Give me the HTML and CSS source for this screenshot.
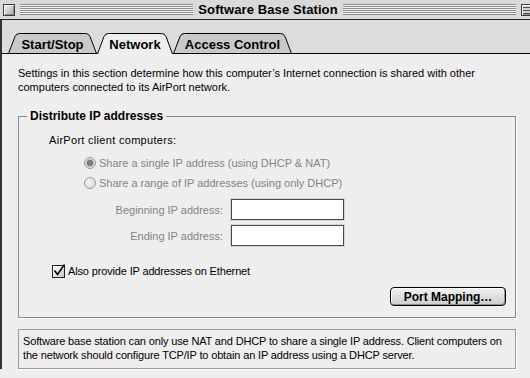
FILE: index.html
```html
<!DOCTYPE html>
<html lang="en">
<head>
  <meta charset="UTF-8" />
  <title>Software Base Station</title>
  <link rel="stylesheet" href="styles.css">
</head>
<body>
  <div class="window">
    <div class="titlebar">
      <span class="close-box"></span>
      <span class="stripes"></span>
      <span class="title">Software Base Station</span>
      <span class="stripes"></span>
      <span class="shade-box"></span>
    </div>

    <div class="frame">
      <div class="tabstrip">
        <div class="tab tab-start">
          <svg class="tab-shape" width="89" height="21" viewBox="0 0 89 21">
            <path d="M0.5 20.5 L7 3.5 Q8.2 0.5 11.5 0.5 H77.5 Q80.8 0.5 82 3.5 L88.5 20.5 Z" fill="#c9c9c9" stroke="#000"/>
          </svg>
          <span>Start/Stop</span>
        </div>
        <div class="tab tab-network selected">
          <svg class="tab-shape" width="76" height="21" viewBox="0 0 76 21">
            <path d="M0.5 21 L7 3.5 Q8.2 0.5 11.5 0.5 H64.5 Q67.8 0.5 69 3.5 L75.5 21 Z" fill="#eee"/>
            <path d="M0.5 21 L7 3.5 Q8.2 0.5 11.5 0.5 H64.5 Q67.8 0.5 69 3.5 L75.5 21" fill="none" stroke="#000"/>
          </svg>
          <span>Network</span>
        </div>
        <div class="tab tab-access">
          <svg class="tab-shape" width="119" height="21" viewBox="0 0 119 21">
            <path d="M0.5 20.5 L7 3.5 Q8.2 0.5 11.5 0.5 H107.5 Q110.8 0.5 112 3.5 L118.5 20.5 Z" fill="#c9c9c9" stroke="#000"/>
          </svg>
          <span>Access Control</span>
        </div>
      </div>

      <div class="pane">
        <p class="intro">Settings in this section determine how this computer’s Internet connection is shared with other<br>computers connected to its AirPort network.</p>

        <fieldset class="group">
          <legend>Distribute IP addresses</legend>
          <div class="group-body">
            <div class="client-label">AirPort client computers:</div>

            <div class="radios">
              <div class="radio-row"><span class="radio on"></span>Share a single IP address (using DHCP &amp; NAT)</div>
              <div class="radio-row"><span class="radio"></span>Share a range of IP addresses (using only DHCP)</div>
            </div>

            <div class="ip-grid">
              <label>Beginning IP address:</label><span class="field"></span>
              <label>Ending IP address:</label><span class="field"></span>
            </div>

            <div class="check-row">
              <span class="checkbox">
                <svg class="tick" width="14" height="14" viewBox="0 0 14 14">
                  <path d="M2.5 6.5 L5.5 10.5 L12.5 0.5" fill="none" stroke="#000" stroke-width="1.6"/>
                </svg>
              </span>
              Also provide IP addresses on Ethernet
            </div>

            <div class="actions">
              <button class="btn">Port Mapping…</button>
            </div>
          </div>
        </fieldset>

        <div class="info">Software base station can only use NAT and DHCP to share a single IP address. Client computers on<br>the network should configure TCP/IP to obtain an IP address using a DHCP server.</div>
      </div>
    </div>
  </div>
</body>
</html>
```

FILE: styles.css
```css
body {
  margin: 0;
  background: #eee;
  font-family: "Liberation Sans", Arial, sans-serif;
  font-size: 11px;
  color: #000;
}

.window {
  width: 530px;
  height: 378px;
  overflow: hidden;
  background: #eee;
}

/* title bar */
.titlebar {
  display: flex;
  align-items: center;
  height: 19px;
  padding-left: 3px;
  overflow: hidden;
  background: #d9d9d9;
  border-bottom: 1px solid #262626;
}

.close-box,
.shade-box {
  flex: none;
  box-sizing: border-box;
  width: 12px;
  height: 12px;
  border: 1px solid #3c3c3c;
  background: linear-gradient(135deg, #f4f4f4, #a8a8a8);
  box-shadow: inset 1px 1px 0 #fff, inset -1px -1px 0 #8a8a8a;
}

.shade-box {
  margin-right: -3px;
  background: repeating-linear-gradient(to bottom, #d0d0d0 0 2px, #555 2px 3px);
}

.stripes {
  flex: 1;
  height: 11px;
  margin: 0 5px;
  background: repeating-linear-gradient(to bottom, #8c8c8c 0 1px, #f5f5f5 1px 2px);
}

.title {
  font-size: 13px;
  font-weight: bold;
  line-height: 19px;
  letter-spacing: 0.1px;
}

/* window body */
.frame {
  border-left: 2px solid #333;
}

.tabstrip {
  display: flex;
  align-items: flex-end;
  box-sizing: border-box;
  height: 34px;
  padding-left: 6px;
  background: #dcdcdc;
  box-shadow: inset 0 -1px 0 #000;
}

.tab {
  position: relative;
  display: flex;
  align-items: center;
  justify-content: center;
  height: 21px;
  padding-top: 1px;
  box-sizing: border-box;
  font-size: 13px;
  font-weight: bold;
}

.tab span {
  position: relative;
}

.tab-shape {
  position: absolute;
  left: 0;
  top: 0;
}

.tab-start { width: 89px; }
.tab-network { width: 76px; }
.tab-access { width: 119px; }

.pane {
  padding: 12px 14px 0 16px;
  background: #eee;
}

.intro {
  margin: 0;
  line-height: 14px;
}

/* group box */
.group {
  margin: 15px 0 0;
  padding: 10px 9px 11px 8px;
  border: 1px solid #8c8c8c;
  box-shadow: 1px 1px 0 #fff;
  min-width: 0;
}

.group legend {
  padding: 0 3px;
  font-size: 12px;
  font-weight: bold;
  line-height: 14px;
}

.group-body {
  padding-left: 22px;
}

.client-label {
  line-height: 14px;
  letter-spacing: 0.3px;
}

.radios {
  margin-top: 6px;
}

.radio-row {
  display: flex;
  align-items: center;
  gap: 3px;
  height: 20px;
  padding-left: 35px;
  color: #838383;
}

.radio {
  box-sizing: border-box;
  width: 12px;
  height: 12px;
  border: 1px solid #9c9c9c;
  border-radius: 50%;
  background: radial-gradient(circle at 40% 40%, #f6f6f6, #d2d2d2);
}

.radio.on {
  background: radial-gradient(circle, #7c7c7c 0 3px, #c4c4c4 3.5px, #e4e4e4 5px);
}

.ip-grid {
  display: grid;
  grid-template-columns: 174px 113px;
  column-gap: 8px;
  row-gap: 5px;
  align-items: center;
  margin-top: 6px;
  color: #838383;
}

.ip-grid label {
  text-align: right;
}

.field {
  box-sizing: border-box;
  height: 21px;
  border: 1px solid #4a4a4a;
  background: #fff;
  box-shadow: 0 0 0 1px #d4d4d4;
}

.check-row {
  display: flex;
  align-items: center;
  gap: 3px;
  margin-top: 18px;
  padding-left: 3px;
  line-height: 14px;
  letter-spacing: -0.15px;
}

.checkbox {
  position: relative;
  box-sizing: border-box;
  width: 13px;
  height: 13px;
  border: 1px solid #222;
  background: linear-gradient(135deg, #fff, #c8c8c8);
}

.tick {
  position: absolute;
  left: -1px;
  top: -2px;
  overflow: visible;
}

.actions {
  display: flex;
  justify-content: flex-end;
  margin-top: 9px;
}

.btn {
  box-sizing: border-box;
  width: 116px;
  height: 19px;
  padding: 0;
  border: 1px solid #000;
  border-radius: 4px;
  background: linear-gradient(to bottom, #f2f2f2, #cdcdcd);
  box-shadow: inset 1px 1px 0 #fff, inset -1px -1px 0 #8e8e8e;
  font-family: inherit;
  font-size: 12px;
  font-weight: bold;
  color: #000;
}

/* note at the bottom */
.info {
  margin-top: 11px;
  padding: 4px 5px 6px 4px;
  border: 1px solid #9a9a9a;
  box-shadow: 1px 1px 0 #fff;
  line-height: 14px;
  white-space: nowrap;
  letter-spacing: -0.15px;
}
```
